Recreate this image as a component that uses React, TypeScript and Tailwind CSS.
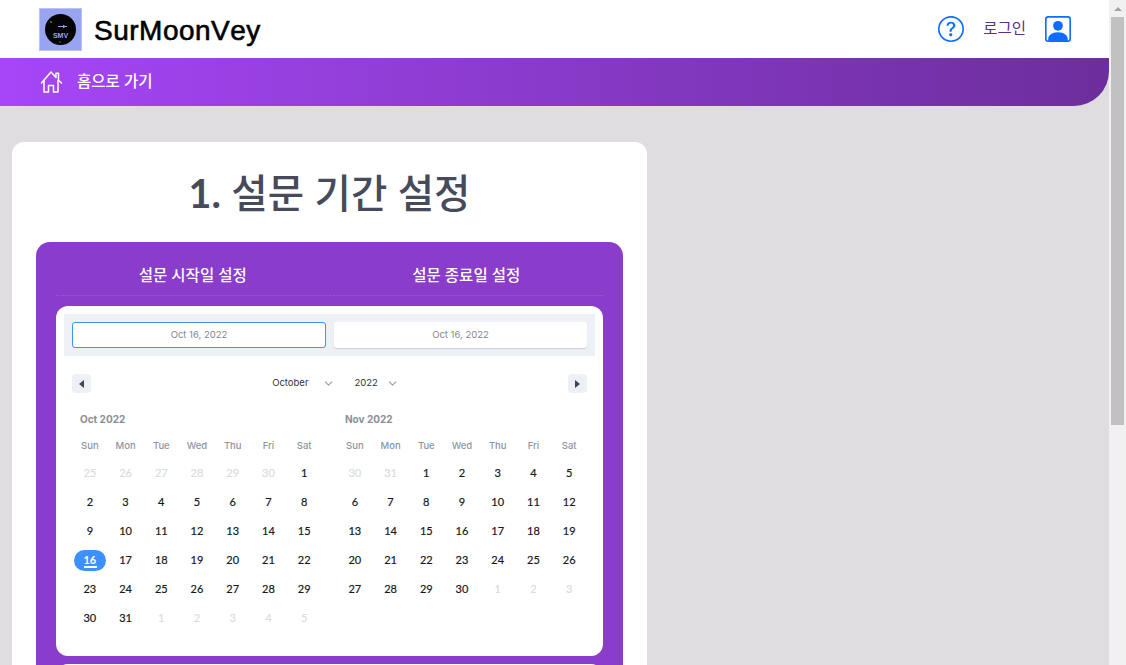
import { BsPersonSquare, BsQuestionCircle } from "react-icons/bs";
import { ChevronDown } from "lucide-react";

const WEEKDAYS = ["Sun", "Mon", "Tue", "Wed", "Thu", "Fri", "Sat"];

type Day = { n: number; muted?: boolean; selected?: boolean };

const range = (from: number, to: number, muted = false): Day[] => {
  const days: Day[] = [];
  for (let n = from; n <= to; n++) days.push({ n, muted });
  return days;
};

const october: Day[] = [
  ...range(25, 30, true),
  ...range(1, 15),
  { n: 16, selected: true },
  ...range(17, 31),
  ...range(1, 5, true),
];

const november: Day[] = [...range(30, 31, true), ...range(1, 30), ...range(1, 3, true)];

function Month({ title, days }: { title: string; days: Day[] }) {
  return (
    <div className="w-[250px]">
      <div className="h-[14px] pl-2 text-[10px] leading-[14px] font-bold text-[#8a8f98]">{title}</div>
      <div className="mt-[13px] grid grid-cols-7">
        {WEEKDAYS.map((d) => (
          <div key={d} className="h-[14px] text-center text-[9.5px] leading-[14px] font-medium text-[#8d95a3]">
            {d}
          </div>
        ))}
      </div>
      <div className="mt-[6px] grid grid-cols-7 auto-rows-[29px] font-['Lato',sans-serif]">
        {days.map((d, i) => (
          <div key={i} className="flex items-center justify-center">
            {d.selected ? (
              <div className="relative flex h-[21px] w-[32px] items-center justify-center rounded-full bg-[#3d91ff] text-[11px] font-bold text-white">
                16
                <span className="absolute bottom-[3px] left-[10px] h-[2px] w-[13px] bg-white" />
              </div>
            ) : (
              <span className={`text-[11px] font-normal [-webkit-text-stroke:0.2px_currentColor] ${d.muted ? "text-[#d9dde3]" : "text-[#16181d]"}`}>
                {d.n}
              </span>
            )}
          </div>
        ))}
      </div>
    </div>
  );
}

function DateBox({ active }: { active?: boolean }) {
  return (
    <div
      className={`flex h-[26px] items-center justify-center rounded-[3px] bg-white text-[9.5px] text-[#7f8792] ${
        active ? "w-[254px] border border-[#3d91ff]" : "flex-1 shadow-[0_1px_1px_#c9ced6]"
      }`}
    >
      Oct 16, 2022
    </div>
  );
}

export default function App() {
  return (
    <div className="flex h-[665px] overflow-hidden bg-[#dfdddf] font-['Inter','Noto_Sans_CJK_KR',sans-serif]">
      <div className="w-[1109px] shrink-0">
        <header className="flex h-[58px] items-center bg-white pl-[39px] pr-[38px]">
          <div className="flex h-[43px] w-[43px] items-center justify-center border border-[#b9c1f5] bg-[#98a4ef]">
            <svg width="31" height="31" viewBox="0 0 31 31">
              <circle cx="15.5" cy="15.5" r="15.5" fill="#050505" />
              <path d="M13 12.5h9M18 11l2 1.5-2 1.5" stroke="#98a4ef" strokeWidth="1" fill="none" />
              <circle cx="6" cy="8" r="0.7" fill="#c9cff5" />
              <circle cx="15" cy="28" r="0.6" fill="#c9cff5" />
              <text x="15.5" y="24" textAnchor="middle" fontSize="7" fontWeight="700" fontFamily="Liberation Sans" fill="#98a4ef">
                SMV
              </text>
            </svg>
          </div>
          <div className="ml-3 mt-[4px] font-['Liberation_Sans',sans-serif] text-[28px] leading-none tracking-[0.5px] text-black [font-kerning:none] [-webkit-text-stroke:0.6px_black]">
            SurMoonVey
          </div>
          <div className="ml-auto flex items-center">
            <BsQuestionCircle className="text-[#0d6efd]" size={26} />
            <span className="ml-[19px] text-[15.5px] text-[#5f2d91]">로그인</span>
            <BsPersonSquare className="ml-[19px] text-[#0d6efd]" size={26} />
          </div>
        </header>

        <nav className="flex h-[48px] items-center rounded-br-[35px] bg-gradient-to-r from-[#a646f8] to-[#6c2e9c] pl-[39px]">
          <svg width="24" height="24" viewBox="0 0 24 24" fill="none" stroke="white" strokeWidth="1.5" strokeLinecap="round" strokeLinejoin="round">
            <path d="M2.5 13 12 2l5 5.5V3.2h2.5v7L22.5 13" />
            <path d="M5 10.5V22h4.5v-6.5h5V22H19V10.5" />
          </svg>
          <span className="ml-[14px] text-[15.5px] font-medium text-white">홈으로 가기</span>
        </nav>

        <main className="pt-[36px] pl-3">
          <section className="w-[635px] rounded-t-[12px] bg-white px-6 pt-[20px]">
            <h1 className="h-[60px] pt-[1px] text-center text-[39.5px] leading-[60px] font-medium text-[#474a5a]">
              <span className="font-['Lato',sans-serif] font-bold">1.</span> 설문 기간 설정
            </h1>

            <div className="mt-5 rounded-[14px] bg-[#8a3ccb] px-5">
              <div className="flex h-[64px] pb-[10px]">
                <div className="flex flex-1 items-center justify-center border-b border-dotted border-[#9a5ad2] pt-[14px] text-[15.5px] font-medium text-white">
                  설문 시작일 설정
                </div>
                <div className="flex flex-1 items-center justify-center border-b border-dotted border-[#9a5ad2] pt-[14px] text-[15.5px] font-medium text-white">
                  설문 종료일 설정
                </div>
              </div>

              <div className="h-[350px] rounded-[12px] bg-white p-2">
                <div className="flex gap-2 bg-[#edf0f5] p-2">
                  <DateBox active />
                  <DateBox />
                </div>

                <div className="mt-[18px] flex h-[19px] items-center justify-between px-2">
                  <button className="flex h-[19px] w-[19px] items-center justify-center rounded-[4px] bg-[#edf0f5]">
                    <span className="h-0 w-0 border-y-[4px] border-r-[5px] border-y-transparent border-r-[#3f4653]" />
                  </button>
                  <div className="ml-[12px] flex items-center text-[9.5px] text-[#2f343d]">
                    <span>October</span>
                    <ChevronDown className="ml-[14px] text-[#9aa1ab]" size={13} />
                    <span className="ml-[19px]">2022</span>
                    <ChevronDown className="ml-[8px] text-[#9aa1ab]" size={13} />
                  </div>
                  <button className="flex h-[19px] w-[19px] items-center justify-center rounded-[4px] bg-[#edf0f5]">
                    <span className="h-0 w-0 border-y-[4px] border-l-[5px] border-y-transparent border-l-[#3f4653]" />
                  </button>
                </div>

                <div className="mt-[19px] flex justify-between px-2">
                  <Month title="Oct 2022" days={october} />
                  <Month title="Nov 2022" days={november} />
                </div>
              </div>

              <div className="mt-2 h-10 rounded-t-[12px] bg-white" />
            </div>
          </section>
        </main>
      </div>

      <div className="flex w-[17px] shrink-0 flex-col items-center bg-[#f1f1f1]">
        <div className="mt-[7px] h-0 w-0 border-x-[4px] border-b-[4px] border-x-transparent border-b-[#a3a3a3]" />
        <div className="mt-[6px] h-[408px] w-[13px] bg-[#c1c1c1]" />
      </div>
    </div>
  );
}
